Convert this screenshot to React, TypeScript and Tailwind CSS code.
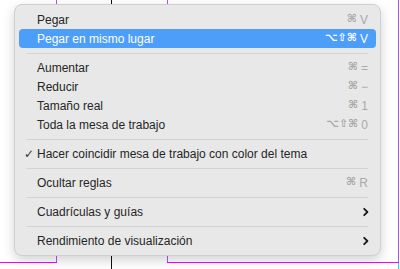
import React from "react";

type Item =
  | { kind: "sep" }
  | {
      kind: "item";
      label: string;
      shortcut?: string;
      active?: boolean;
      checked?: boolean;
      submenu?: boolean;
    };

const items: Item[] = [
  { kind: "item", label: "Pegar", shortcut: "⌘V" },
  { kind: "item", label: "Pegar en mismo lugar", shortcut: "⌥⇧⌘V", active: true },
  { kind: "sep" },
  { kind: "item", label: "Aumentar", shortcut: "⌘=" },
  { kind: "item", label: "Reducir", shortcut: "⌘−" },
  { kind: "item", label: "Tamaño real", shortcut: "⌘1" },
  { kind: "item", label: "Toda la mesa de trabajo", shortcut: "⌥⇧⌘0" },
  { kind: "sep" },
  { kind: "item", label: "Hacer coincidir mesa de trabajo con color del tema", checked: true },
  { kind: "sep" },
  { kind: "item", label: "Ocultar reglas", shortcut: "⌘R" },
  { kind: "sep" },
  { kind: "item", label: "Cuadrículas y guías", submenu: true },
  { kind: "sep" },
  { kind: "item", label: "Rendimiento de visualización", submenu: true },
];

function Shortcut({ keys, active }: { keys: string; active?: boolean }) {
  const mods = keys.slice(0, -1);
  const key = keys.slice(-1);
  return (
    <span
      className={`flex items-center gap-[3px] ${
        active ? "text-white" : "text-[#a9a9a9]"
      }`}
      style={{ fontFamily: '"DejaVu Sans", sans-serif' }}
    >
      <span className="text-[11px] font-bold">{mods}</span>
      <span style={{ fontFamily: '"Liberation Sans", sans-serif' }} className="text-[12px]">
        {key}
      </span>
    </span>
  );
}

function Chevron() {
  return (
    <svg width="6" height="10" viewBox="0 0 6 10" className="mr-[-1px]">
      <path d="M1.2 1.8 L4.4 5 L1.2 8.2" fill="none" stroke="#1a1a1a" strokeWidth="1.8" strokeLinecap="round" strokeLinejoin="round" />
    </svg>
  );
}

export default function App() {
  return (
    <div className="relative w-[400px] h-[269px] bg-white overflow-hidden">
      {/* canvas guides behind the menu */}
      <svg className="absolute inset-0" width="400" height="269">
        <line x1="56.5" y1="0" x2="56.5" y2="262" stroke="#a855f7" strokeWidth="1" />
        <line x1="167.5" y1="0" x2="167.5" y2="262" stroke="#a855f7" strokeWidth="1" />
        <line x1="398.5" y1="0" x2="398.5" y2="262" stroke="#a855f7" strokeWidth="1" />
        <line x1="398.5" y1="262" x2="398.5" y2="269" stroke="#22d3ee" strokeWidth="1" />
        <line x1="111.5" y1="0" x2="111.5" y2="269" stroke="#111" strokeWidth="1" />
        <line x1="0" y1="262.5" x2="57" y2="262.5" stroke="#ff00ff" strokeWidth="1" />
        <line x1="167" y1="262.5" x2="399" y2="262.5" stroke="#ff00ff" strokeWidth="1" />
      </svg>

      <div
        className="absolute left-[14px] top-[4px] w-[367px] rounded-[8px] border border-[#cfcfcf] bg-[#e8e8e8] px-[4px] pt-[5px] pb-[5px] shadow-[0_4px_12px_rgba(0,0,0,0.18)]"
        style={{ fontFamily: '"Liberation Sans", "Inter", sans-serif' }}
      >
        {items.map((it, i) =>
          it.kind === "sep" ? (
            <div key={i} className="h-[10px] flex items-center px-[8px]">
              <div className="h-px w-full bg-[#d3d3d3]" />
            </div>
          ) : (
            <div
              key={i}
              className={`h-[19px] flex items-center justify-between rounded-[4px] pl-[18px] pr-[8px] text-[12px] ${
                it.active ? "bg-[#4d9ef9] text-white" : "text-[#262626]"
              }`}
            >
              <span className="relative">
                {it.checked && (
                  <span
                    className="absolute left-[-13px] top-[0px] text-[12px] text-[#333]"
                    style={{ fontFamily: '"DejaVu Sans", sans-serif' }}
                  >
                    ✓
                  </span>
                )}
                {it.label}
              </span>
              {it.shortcut && <Shortcut keys={it.shortcut} active={it.active} />}
              {it.submenu && <Chevron />}
            </div>
          )
        )}
      </div>
    </div>
  );
}
